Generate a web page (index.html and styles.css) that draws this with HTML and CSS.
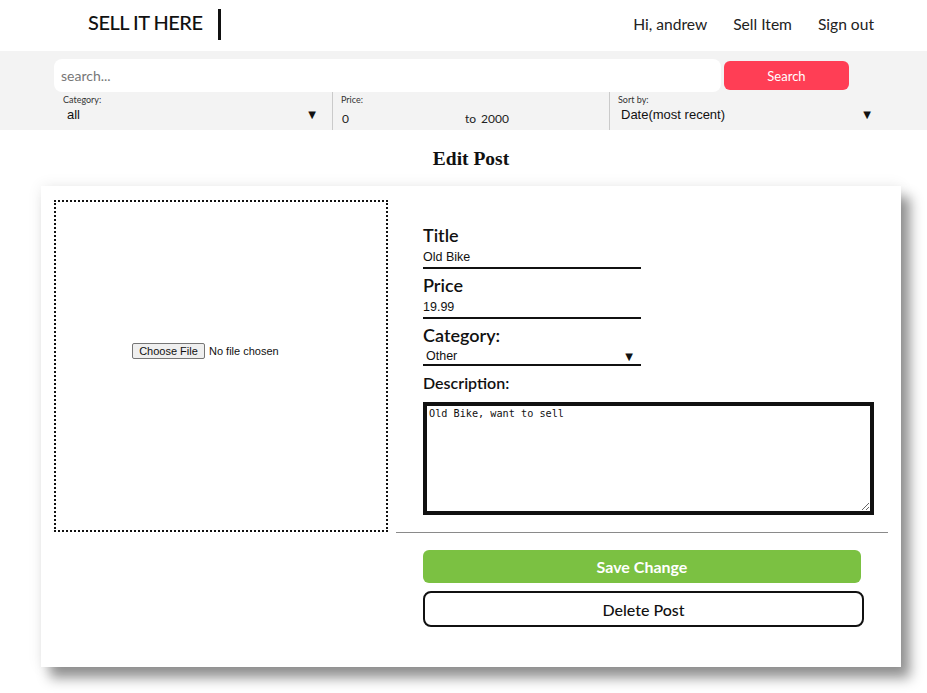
FILE: index.html
```html
<!DOCTYPE html>
<html lang="en">
<head>
<meta charset="utf-8">
<title>Edit Post - Sell It Here</title>
<link rel="stylesheet" href="styles.css">
</head>
<body>
<header class="topbar">
  <div class="brand">
    <span class="brand-name">SELL IT HERE</span>
    <span class="brand-bar"></span>
  </div>
  <nav class="nav">
    <a href="#">Hi, andrew</a>
    <a href="#">Sell Item</a>
    <a href="#">Sign out</a>
  </nav>
</header>

<section class="filters">
  <div class="search-row">
    <input class="search-input" type="text" placeholder="search...">
    <button class="search-btn" type="button">Search</button>
  </div>
  <div class="filter-row">
    <div class="filter filter-first">
      <div class="filter-label">Category:</div>
      <div class="fake-select"><span>all</span><span class="arrow">▼</span></div>
    </div>
    <div class="filter">
      <div class="filter-label">Price:</div>
      <div class="price-row"><span class="price-min">0</span><span class="price-to">to</span><span class="price-max">2000</span></div>
    </div>
    <div class="filter">
      <div class="filter-label">Sort by:</div>
      <div class="fake-select sort-select"><span>Date(most recent)</span><span class="arrow">▼</span></div>
    </div>
  </div>
</section>

<main class="page">
  <h3 class="page-title">Edit Post</h3>
  <div class="card">
    <div class="dropzone">
      <label class="file-pick">
        <span class="file-btn">Choose File</span>
        <span class="file-name">No file chosen</span>
      </label>
    </div>
    <div class="editor">
      <div class="form">
        <div class="field">
          <div class="field-label">Title</div>
          <div class="line-input">Old Bike</div>
        </div>
        <div class="field">
          <div class="field-label">Price</div>
          <div class="line-input">19.99</div>
        </div>
        <div class="field">
          <div class="field-label">Category:</div>
          <div class="line-select"><span>Other</span><span class="arrow">▼</span></div>
        </div>
        <div class="desc-label">Description:</div>
        <textarea class="desc">Old Bike, want to sell</textarea>
      </div>
      <div class="divider"></div>
      <div class="actions">
        <button class="btn-save" type="button">Save Change</button>
        <button class="btn-delete" type="button">Delete Post</button>
      </div>
    </div>
  </div>
</main>
</body>
</html>
```

FILE: styles.css
```css
* { box-sizing: border-box; }

html, body { min-height: 693px; }

body {
  margin: 0;
  font-family: Lato, "Liberation Sans", sans-serif;
  color: #111;
  background: #fff;
}

/* Header */
.topbar {
  display: flex;
  align-items: flex-start;
  justify-content: space-between;
  height: 51px;
  padding: 0 53px 0 88px;
}
.brand {
  display: flex;
  align-items: flex-start;
  margin-top: 9px;
}
.brand-name {
  font-size: 20px;
  font-weight: 500;
  letter-spacing: -0.5px;
  line-height: 24px;
  margin-top: 1px;
  color: #111;
}
.brand-bar {
  width: 3px;
  height: 31px;
  background: #111;
  margin-left: 16px;
}
.nav {
  display: flex;
  gap: 26px;
  margin-top: 15px;
  font-size: 15.6px;
  line-height: 19px;
}
.nav a {
  color: #222;
  text-decoration: none;
}

/* Filters */
.filters {
  background: #f3f3f3;
  height: 79px;
  padding: 8px 0 0 54px;
}
.search-row {
  display: flex;
  align-items: center;
  height: 33px;
}
.search-input {
  width: 667px;
  height: 33px;
  border: none;
  border-radius: 8px;
  background: #fff;
  padding: 0 7px;
  font: 14px Lato, sans-serif;
  color: #333;
  outline: none;
}
.search-input::placeholder { color: #777; }
.search-btn {
  margin-left: 3px;
  width: 125px;
  height: 29px;
  border: none;
  border-radius: 6px;
  background: #ff3e55;
  color: #fff;
  font: 13px Lato, sans-serif;
}
.filter-row {
  display: grid;
  grid-template-columns: 278px 277px 277px;
  height: 38px;
}
.filter {
  padding: 2px 0 0 8px;
  border-left: 1px solid #cacaca;
}
.filter-first {
  border-left: none;
  padding-left: 9px;
}
.filter-label {
  font-size: 9px;
  line-height: 11px;
  color: #333;
}
.fake-select {
  display: flex;
  justify-content: space-between;
  align-items: center;
  margin: 2px 16px 0 0;
  padding-left: 4px;
  font: 13px/16px "Liberation Sans", Arial, sans-serif;
  color: #111;
}
.sort-select { margin-right: 15px; padding-left: 3px; }
.arrow {
  font: 10px/10px "DejaVu Sans", sans-serif;
  color: #111;
}
.price-row {
  display: flex;
  margin-top: 7px;
  padding-left: 1px;
  font-size: 12px;
  line-height: 14px;
  color: #222;
}
.price-min { width: 123px; }
.price-to { margin-right: 5px; }

/* Page */
.page {
  margin: 0 0 26px 41px;
  width: 860px;
}
.page-title {
  margin: 18px 0 16px;
  text-align: center;
  font: bold 19.5px/22px "Liberation Serif", "Times New Roman", serif;
}
.card {
  display: flex;
  align-items: flex-start;
  background: #fff;
  padding: 14px 13px 40px;
  box-shadow: 0 0 14px rgba(0, 0, 0, 0.08), 9px 11px 12px rgba(0, 0, 0, 0.42);
}
.dropzone {
  flex: none;
  width: 334px;
  height: 332px;
  border: 2px dotted #111;
  padding: 141px 0 0 76px;
}
.file-pick {
  display: flex;
  align-items: center;
  gap: 4px;
  font: 11px/14px "Liberation Sans", Arial, sans-serif;
  color: #111;
}
.file-btn {
  display: inline-block;
  height: 16px;
  width: 73px;
  text-align: center;
  border: 1px solid #767676;
  border-radius: 2px;
  background: #efefef;
  color: #111;
}

.editor {
  flex: 1;
  margin-left: 8px;
  padding-top: 23px;
}
.form {
  padding: 0 14px 0 27px;
}
.field { margin-bottom: 4px; }
.field-label {
  font-size: 18px;
  font-weight: 600;
  line-height: 24px;
  color: #111;
}
.line-input {
  width: 218px;
  height: 22px;
  border-bottom: 2px solid #111;
  font: 12.5px/20px "Liberation Sans", Arial, sans-serif;
  color: #111;
}
.line-select {
  display: flex;
  justify-content: space-between;
  align-items: center;
  width: 218px;
  height: 19px;
  border-bottom: 2px solid #111;
  padding: 2px 8px 0 3px;
  font: 12.5px/15px "Liberation Sans", Arial, sans-serif;
  color: #111;
}
.desc-label {
  margin-top: 6px;
  font-size: 16px;
  font-weight: 600;
  line-height: 22px;
}
.desc {
  display: block;
  margin-top: 8px;
  width: 451px;
  height: 113px;
  border: 4px solid #111;
  padding: 2px 2px;
  font: 10.2px/12px "DejaVu Sans Mono", "Liberation Mono", monospace;
  color: #111;
  resize: both;
  outline: none;
}
.divider {
  margin-top: 17px;
  height: 1px;
  background: #8a8a8a;
}
.actions {
  display: flex;
  flex-direction: column;
  align-items: flex-start;
  padding-left: 27px;
}
.btn-save {
  margin-top: 17px;
  width: 438px;
  height: 33px;
  border: none;
  border-radius: 6px;
  background: #7bc142;
  color: #fff;
  font: 700 16px Lato, sans-serif;
}
.btn-delete {
  margin-top: 8px;
  width: 441px;
  height: 36px;
  border: 2px solid #111;
  border-radius: 8px;
  background: #fff;
  color: #111;
  font: 500 16px Lato, sans-serif;
}
```
